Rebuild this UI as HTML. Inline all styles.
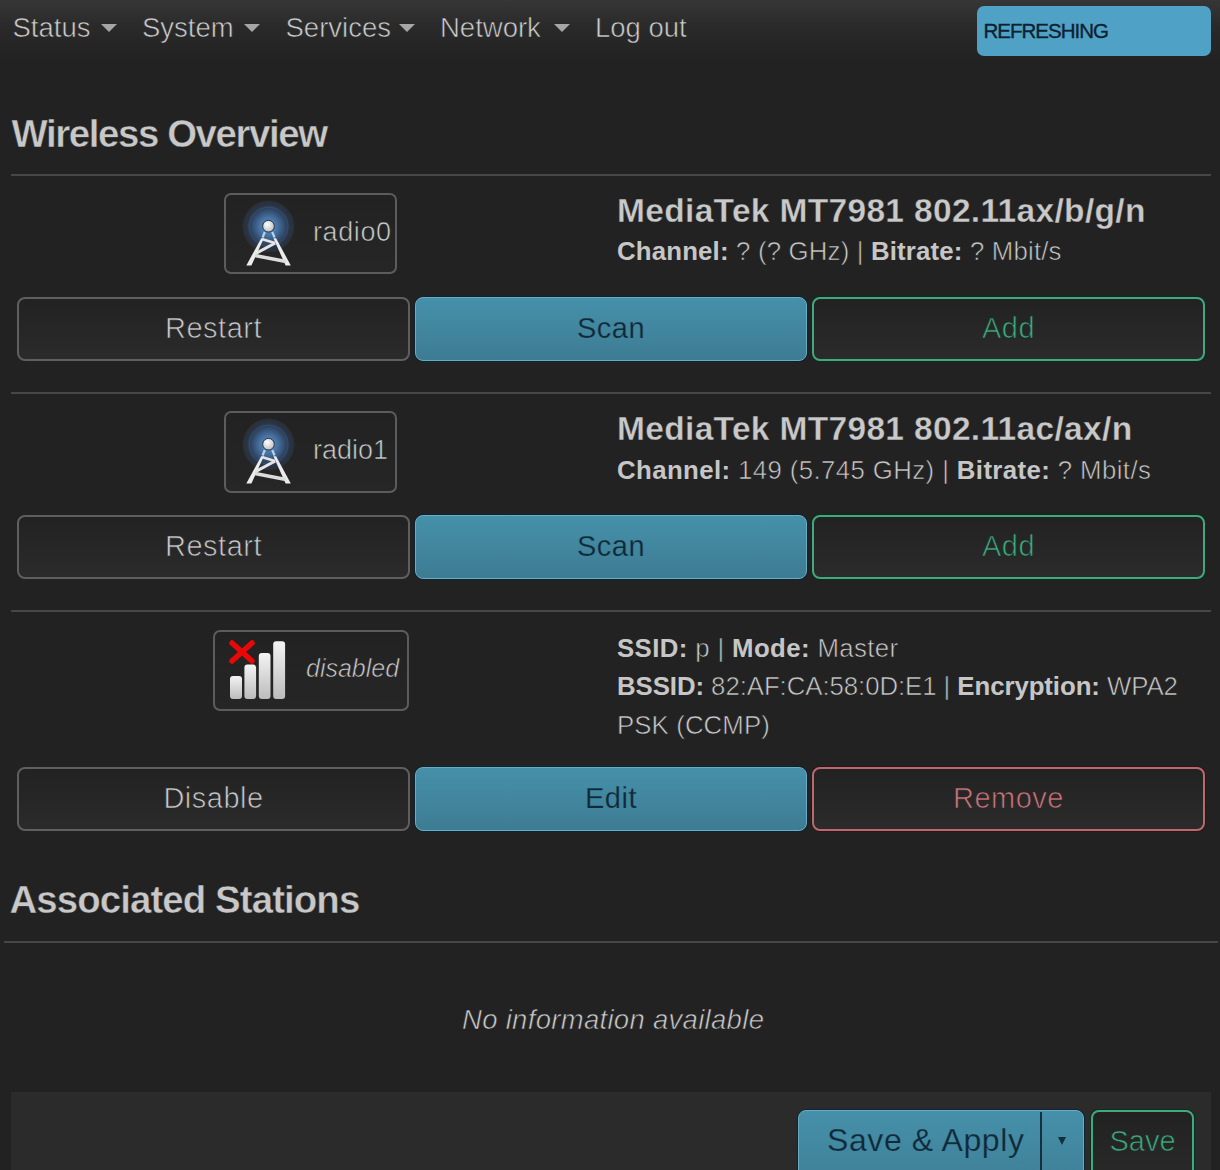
<!DOCTYPE html>
<html><head><meta charset="utf-8">
<style>
*{box-sizing:border-box;margin:0;padding:0}
html,body{width:1220px;height:1170px;overflow:hidden;background:#222222}
body{position:relative;font-family:"Liberation Sans",sans-serif;color:#c8c8c8}
.a{position:absolute;white-space:nowrap;line-height:1}
#hdr{position:absolute;left:0;top:0;width:1220px;height:64px;background:linear-gradient(#363636,#2a2a2a 40%,#222 95%)}
.nav{font-size:27.5px;color:#cdcdcd;-webkit-text-stroke:0.6px #2a2a2a}
.tri{position:absolute;width:0;height:0;border-left:8px solid transparent;border-right:8px solid transparent;border-top:8px solid #a6a6a6}
#refresh{position:absolute;left:977px;top:6px;width:234px;height:50px;background:#4fa2c5;border-radius:7px}
#refresh span{position:absolute;left:6.5px;top:14.5px;font-size:20.5px;line-height:1;color:#0e2130;letter-spacing:-1px;-webkit-text-stroke:0.35px #0e2130}
.h2{font-weight:bold;font-size:38.4px;color:#c8c8c8;-webkit-text-stroke:0.45px #222}
.hr{position:absolute;height:2px;background:#474747}
.badge{position:absolute;border:2px solid #5c5c5c;border-radius:7px;background:linear-gradient(#222,#262626)}
.btn{position:absolute;height:64px;border:2px solid #5f5f5f;border-radius:8px;background:linear-gradient(#222222,#2b2b2b);font-size:29px;color:#c9c9c9;text-align:center}
.btn span{position:absolute;left:0;right:0;top:14.5px;line-height:1;letter-spacing:0.5px;-webkit-text-stroke:0.7px #262626}
.btn.blue span{-webkit-text-stroke:0.25px #4288a2;top:15.5px}
.btn.blue{border:1.5px solid #6aacc6;background:linear-gradient(#4690aa,#3d7c93);color:#102a38;box-shadow:0 0 0 1px #0e2430}
.btn.green{border-color:#40a97f;color:#3aab7c;box-shadow:0 0 0 1px #0f2a1e}
.btn.red{border-color:#b86a6e;color:#cc747a;box-shadow:0 0 0 1px #2e1414}
.model{font-weight:bold;font-size:33.5px;color:#c9c9c9;letter-spacing:0.33px;-webkit-text-stroke:0.35px #222}
.info{font-size:25.8px;color:#cacaca;-webkit-text-stroke:0.6px #222}
.info b{font-weight:bold;color:#c6c6c6;-webkit-text-stroke:0}
</style></head>
<body>
<div id="hdr"></div>
<div class="a nav" style="left:12.5px;top:14px">Status</div>
<div class="tri" style="left:101px;top:24px"></div>
<div class="a nav" style="left:142px;top:14px">System</div>
<div class="tri" style="left:244px;top:24px"></div>
<div class="a nav" style="left:285.5px;top:14px">Services</div>
<div class="tri" style="left:399px;top:24px"></div>
<div class="a nav" style="left:440px;top:14px">Network</div>
<div class="tri" style="left:554px;top:24px"></div>
<div class="a nav" style="left:595px;top:14px">Log out</div>
<div id="refresh"><span>REFRESHING</span></div>

<div class="a h2" style="left:11.5px;top:114.5px;letter-spacing:-1.4px">Wireless Overview</div>
<div class="hr" style="left:11px;top:174px;width:1200px"></div>

<!-- section 1 -->
<div class="badge" style="left:224px;top:193px;width:173px;height:81px"></div>
<svg class="a" style="left:235px;top:195px" width="70" height="77" viewBox="0 0 70 77">
<defs>
<radialGradient id="glow" cx="0.5" cy="0.5" r="0.5">
<stop offset="0" stop-color="#6692c2"/>
<stop offset="0.35" stop-color="#46709f"/>
<stop offset="0.62" stop-color="#30496a"/>
<stop offset="0.8" stop-color="#283446"/>
<stop offset="0.93" stop-color="#2b3038"/>
<stop offset="1" stop-color="#222" stop-opacity="0"/>
</radialGradient>
<radialGradient id="ball" cx="0.4" cy="0.35" r="0.7">
<stop offset="0" stop-color="#ffffff"/>
<stop offset="1" stop-color="#bdbdbd"/>
</radialGradient>
</defs>
<circle cx="33.5" cy="31.6" r="27" fill="url(#glow)"/>
<circle cx="33.5" cy="31.6" r="19.5" fill="none" stroke="#5f7fa8" stroke-opacity="0.35" stroke-width="0.7"/>
<g stroke="#b4d2ec" stroke-width="2.2"><line x1="29.8" y1="37" x2="27.6" y2="42.5"/><line x1="37.2" y1="37" x2="39.6" y2="42.5"/></g>
<g fill="#ececec">
<polygon points="26.2,43.2 28.9,43.2 16.4,70.5 11.3,70.5"/>
<polygon points="38.4,43.2 41.1,43.2 55.8,70.5 50.6,70.5"/>
</g>
<g stroke="#e4e4e4" fill="none">
<line x1="27.5" y1="44.2" x2="40" y2="48" stroke-width="2.6"/>
<line x1="40.2" y1="48" x2="20.5" y2="58.6" stroke-width="3"/>
<line x1="20" y1="60.6" x2="51" y2="66.6" stroke-width="3.6" stroke="#dcdcdc"/>
</g>
<circle cx="33.5" cy="31.2" r="5.8" fill="url(#ball)" stroke="#1b2a3a" stroke-width="0.9"/>
</svg>
<div class="a" style="left:313px;top:218.5px;font-size:27px;color:#cbcbcb;letter-spacing:0.6px;-webkit-text-stroke:0.6px #222">radio0</div>
<div class="a model" style="left:617px;top:194px">MediaTek MT7981 802.11ax/b/g/n</div>
<div class="a info" style="left:617px;top:239px;letter-spacing:0.17px"><b>Channel:</b> ? (? GHz) | <b>Bitrate:</b> ? Mbit/s</div>
<div class="btn" style="left:17px;top:297px;width:393px"><span>Restart</span></div>
<div class="btn blue" style="left:415px;top:297px;width:392px"><span>Scan</span></div>
<div class="btn green" style="left:812px;top:297px;width:393px"><span>Add</span></div>
<div class="hr" style="left:11px;top:392px;width:1200px"></div>

<!-- section 2 -->
<div class="badge" style="left:224px;top:411px;width:173px;height:82px"></div>
<svg class="a" style="left:235px;top:413px" width="70" height="77" viewBox="0 0 70 77">
<circle cx="33.5" cy="31.6" r="27" fill="url(#glow)"/>
<circle cx="33.5" cy="31.6" r="19.5" fill="none" stroke="#5f7fa8" stroke-opacity="0.35" stroke-width="0.7"/>
<g stroke="#b4d2ec" stroke-width="2.2"><line x1="29.8" y1="37" x2="27.6" y2="42.5"/><line x1="37.2" y1="37" x2="39.6" y2="42.5"/></g>
<g fill="#ececec">
<polygon points="26.2,43.2 28.9,43.2 16.4,70.5 11.3,70.5"/>
<polygon points="38.4,43.2 41.1,43.2 55.8,70.5 50.6,70.5"/>
</g>
<g stroke="#e4e4e4" fill="none">
<line x1="27.5" y1="44.2" x2="40" y2="48" stroke-width="2.6"/>
<line x1="40.2" y1="48" x2="20.5" y2="58.6" stroke-width="3"/>
<line x1="20" y1="60.6" x2="51" y2="66.6" stroke-width="3.6" stroke="#dcdcdc"/>
</g>
<circle cx="33.5" cy="31.2" r="5.8" fill="url(#ball)" stroke="#1b2a3a" stroke-width="0.9"/>
</svg>
<div class="a" style="left:313px;top:436.5px;font-size:27px;color:#cbcbcb;letter-spacing:0px;-webkit-text-stroke:0.6px #222">radio1</div>
<div class="a model" style="left:617px;top:412px">MediaTek MT7981 802.11ac/ax/n</div>
<div class="a info" style="left:617px;top:457.7px;letter-spacing:0.39px"><b>Channel:</b> 149 (5.745 GHz) | <b>Bitrate:</b> ? Mbit/s</div>
<div class="btn" style="left:17px;top:515px;width:393px"><span>Restart</span></div>
<div class="btn blue" style="left:415px;top:515px;width:392px"><span>Scan</span></div>
<div class="btn green" style="left:812px;top:515px;width:393px"><span>Add</span></div>
<div class="hr" style="left:11px;top:610px;width:1200px"></div>

<!-- section 3 -->
<div class="badge" style="left:213px;top:630px;width:196px;height:81px"></div>
<svg class="a" style="left:222px;top:635px" width="70" height="70" viewBox="0 0 70 70">
<defs>
<linearGradient id="bar" x1="0" y1="0" x2="0" y2="1">
<stop offset="0" stop-color="#f4f4f4"/><stop offset="1" stop-color="#bcbcbc"/>
</linearGradient>
</defs>
<rect x="8" y="41" width="12" height="23" rx="3" fill="url(#bar)"/>
<rect x="22.4" y="29.6" width="11.7" height="34.4" rx="3" fill="url(#bar)"/>
<rect x="36.8" y="18" width="11.7" height="46" rx="3" fill="url(#bar)"/>
<rect x="51.2" y="6.3" width="11.9" height="57.7" rx="3" fill="url(#bar)"/>
<g stroke="#e80808" stroke-width="5.5" stroke-linecap="round"><line x1="10" y1="8" x2="30" y2="26"/><line x1="30" y1="8" x2="10" y2="26"/></g>
</svg>
<div class="a" style="left:306px;top:656px;font-size:25px;font-style:italic;color:#cbcbcb;-webkit-text-stroke:0.6px #232323">disabled</div>
<div class="a info" style="left:617px;top:636.4px;letter-spacing:0.37px"><b>SSID:</b> p | <b>Mode:</b> Master</div>
<div class="a info" style="left:617px;top:674px;letter-spacing:-0.07px"><b>BSSID:</b> 82:AF:CA:58:0D:E1 | <b>Encryption:</b> WPA2</div>
<div class="a info" style="left:617px;top:712.5px;letter-spacing:0.1px">PSK (CCMP)</div>
<div class="btn" style="left:17px;top:767px;width:393px"><span>Disable</span></div>
<div class="btn blue" style="left:415px;top:767px;width:392px"><span>Edit</span></div>
<div class="btn red" style="left:812px;top:767px;width:393px"><span>Remove</span></div>

<div class="a h2" style="left:9.5px;top:881px;letter-spacing:-0.9px">Associated Stations</div>
<div class="hr" style="left:4px;top:941px;width:1214px"></div>
<div class="a" style="left:462px;top:1006px;font-size:27.5px;font-style:italic;color:#cbcbcb;letter-spacing:0.3px;-webkit-text-stroke:0.6px #222">No information available</div>

<div style="position:absolute;left:11px;top:1092px;width:1200px;height:100px;background:#2b2b2b"></div>
<div class="btn blue" style="left:798px;top:1110px;width:286px;height:90px;font-size:32px"><span style="left:28px;right:auto;top:12.5px;letter-spacing:0.6px">Save &amp; Apply</span></div>
<div style="position:absolute;left:1040px;top:1112px;width:2px;height:70px;background:#15303d"></div>
<div class="tri" style="left:1057.5px;top:1137px;border-left-width:4.5px;border-right-width:4.5px;border-top:8px solid #15303d"></div>
<div class="btn green" style="left:1091px;top:1110px;width:103px;height:90px;font-size:29px"><span style="top:15px;letter-spacing:0">Save</span></div>
</body></html>
